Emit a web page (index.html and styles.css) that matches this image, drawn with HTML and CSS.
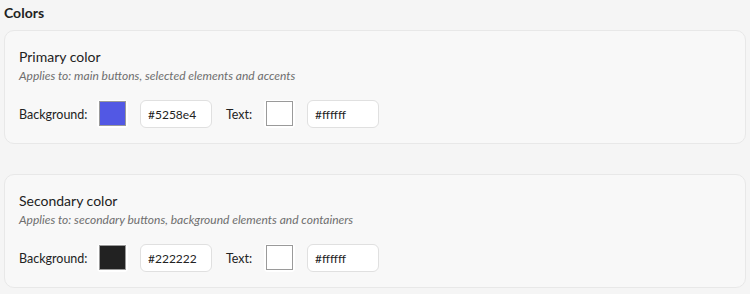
FILE: index.html
```html
<!DOCTYPE html>
<html lang="en">
<head>
    <meta charset="UTF-8">
    <title>Colors</title>
    <link rel="stylesheet" href="styles.css">
</head>
<body>
    <h3 class="heading">Colors</h3>
    <div class="card">
        <div class="card-title">Primary color</div>
        <div class="card-note">Applies to: main buttons, selected elements and accents</div>
        <div class="row">
            <span class="label">Background:</span>
            <span class="swatch"><span class="chip" style="background: #5258e4"></span></span>
            <input class="hex" value="#5258e4">
            <span class="label text-label">Text:</span>
            <span class="swatch"><span class="chip" style="background: #ffffff"></span></span>
            <input class="hex" value="#ffffff">
        </div>
    </div>
    <div class="card">
        <div class="card-title">Secondary color</div>
        <div class="card-note">Applies to: secondary buttons, background elements and containers</div>
        <div class="row">
            <span class="label">Background:</span>
            <span class="swatch"><span class="chip" style="background: #222222"></span></span>
            <input class="hex" value="#222222">
            <span class="label text-label">Text:</span>
            <span class="swatch"><span class="chip" style="background: #ffffff"></span></span>
            <input class="hex" value="#ffffff">
        </div>
    </div>
</body>
</html>
```

FILE: styles.css
```css
body {
    margin: 0;
    padding: 0 4px;
    background: #f5f5f5;
    font-family: Lato, "Liberation Sans", sans-serif;
    color: #222;
}
.heading {
    margin: 0;
    padding-top: 4px;
    height: 26px;
    font-size: 14px;
    font-weight: bold;
    line-height: 17px;
}
.card {
    background: #f8f8f8;
    border: 1px solid #e8e8e8;
    border-radius: 10px;
    padding: 17px 14px 15px;
    margin-bottom: 30px;
}
.card:last-child {
    margin-bottom: 0;
}
.card-title {
    font-size: 14px;
    line-height: 18px;
}
.card-note {
    margin-top: 2px;
    font-size: 12px;
    font-style: italic;
    color: #6e6e6e;
    line-height: 16px;
}
.row {
    display: flex;
    align-items: center;
    height: 28px;
    margin-top: 16px;
    font-size: 12.5px;
}
.label {
    width: 78px;
}
.text-label {
    width: 38px;
    margin-left: 14px;
}
.swatch {
    display: flex;
    padding: 1px 2px 2px;
    margin-right: 12px;
    background: #fff;
    border-radius: 4px;
}
.chip {
    width: 25px;
    height: 23px;
    border: 1px solid #9a9a9a;
}
.hex {
    width: 72px;
    height: 28px;
    box-sizing: border-box;
    border: 1px solid #e0e0e0;
    border-radius: 6px;
    background: #fff;
    padding: 0 7px;
    font-family: Lato, "Liberation Sans", sans-serif;
    font-size: 12px;
    color: #222;
}
```
